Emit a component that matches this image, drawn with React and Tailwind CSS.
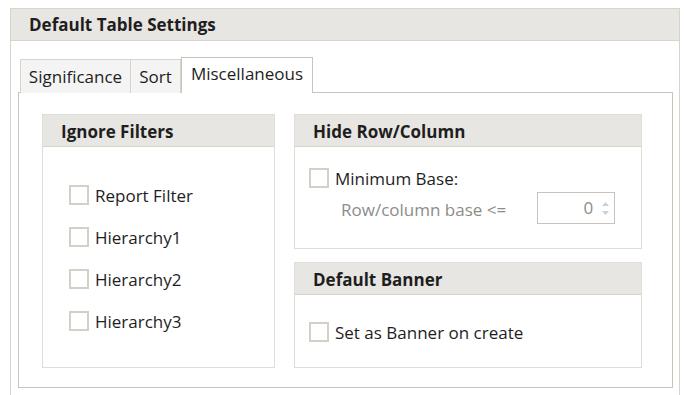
const font = { fontFamily: '"Segoe UI", "Open Sans", "Noto Sans", sans-serif' };

const Check = ({ label }) => (
  <label className="flex items-center h-[22px] gap-[6px] text-[17px] leading-[22px] text-[#1e1e1e]">
    <span className="block w-[20px] h-[20px] border-2 border-[#d4d0c8] bg-white" />
    <span className="pt-[1px]">{label}</span>
  </label>
);

const Box = ({ title, className, children }) => (
  <div className={`border border-[#e0ddd4] bg-white ${className}`}>
    <div className="h-[32px] bg-[#e8e6e2] border-b border-[#d8d4ca] flex items-center pl-[18px] pt-[2px] text-[17px] leading-[22px] font-bold text-[#1e1e1e]">
      {title}
    </div>
    {children}
  </div>
);

export default function App() {
  return (
    <div className="w-[684px] h-[395px] bg-white overflow-hidden pt-[8px] pl-[10px]" style={font}>
      <div className="w-[670px] h-[400px] border border-[#d8d4ca]">
        {/* panel header */}
        <div className="h-[32px] bg-[#e8e6e2] border-b border-[#d8d4ca] flex items-center pl-[18px] pt-[1px] text-[17px] leading-[22px] font-bold text-[#1e1e1e]">
          Default Table Settings
        </div>

        <div className="pl-[7px] pt-[16px]">
          {/* tabs */}
          <div className="flex items-end ml-[2px] h-[36px] relative z-10">
            <div className="h-[34px] w-[111px] flex items-center justify-center bg-[#f4f4f4] border border-[#d8d4ca] border-b-0 text-[17px] leading-[22px] text-[#1e1e1e]">
              Significance
            </div>
            <div className="h-[34px] w-[50px] flex items-center justify-center bg-[#f4f4f4] border border-[#d8d4ca] border-b-0 border-l-0 text-[17px] leading-[22px] text-[#1e1e1e]">
              Sort
            </div>
            <div className="h-[36px] w-[132px] pb-[3px] flex items-center justify-center bg-white border border-[#c8c4ba] border-b-0 text-[17px] leading-[22px] text-[#1e1e1e]">
              Miscellaneous
            </div>
          </div>

          {/* tab content */}
          <div className="-mt-[1px] w-[655px] h-[296px] border border-[#c8c4ba] pl-[23px] pt-[21px] flex gap-[19px]">
            <Box title="Ignore Filters" className="w-[233px] h-[254px]">
              <div className="pl-[26px] pt-[37px] flex flex-col gap-[20px]">
                <Check label="Report Filter" />
                <Check label="Hierarchy1" />
                <Check label="Hierarchy2" />
                <Check label="Hierarchy3" />
              </div>
            </Box>

            <div className="flex flex-col gap-[13px]">
              <Box title="Hide Row/Column" className="w-[348px] h-[135px]">
                <div className="pl-[14px] pt-[20px]">
                  <Check label="Minimum Base:" />
                  <div className="flex items-center mt-[3px] pl-[32px]">
                    <span className="text-[17px] leading-[22px] text-[#8c8c8c] pt-[4px]">Row/column base &lt;=</span>
                    <div className="ml-[31px] w-[78px] h-[32px] border border-[#c8c4ba] flex items-center justify-end pr-[5px]">
                      <span className="text-[17px] leading-[22px] text-[#8c8c8c] mr-[9px]">0</span>
                      <div className="flex flex-col items-center gap-[5px]">
                        <svg width="7" height="4" viewBox="0 0 7 4"><path d="M0 4 L3.5 0 L7 4 Z" fill="#cfcfcf" /></svg>
                        <svg width="7" height="4" viewBox="0 0 7 4"><path d="M0 0 L3.5 4 L7 0 Z" fill="#cfcfcf" /></svg>
                      </div>
                    </div>
                  </div>
                </div>
              </Box>

              <Box title="Default Banner" className="w-[348px] h-[106px]">
                <div className="pl-[14px] pt-[26px]">
                  <Check label="Set as Banner on create" />
                </div>
              </Box>
            </div>
          </div>
        </div>
      </div>
    </div>
  );
}
